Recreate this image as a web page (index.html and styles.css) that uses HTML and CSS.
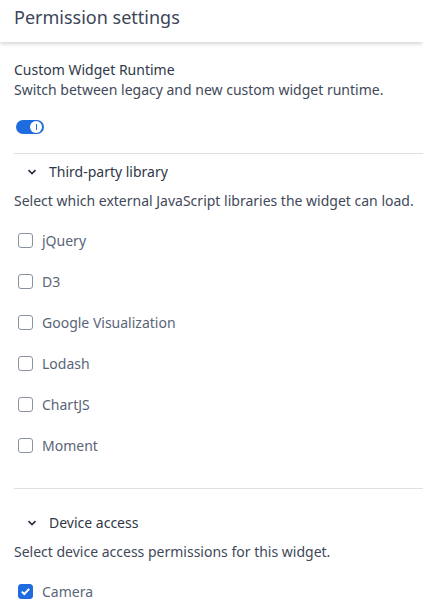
FILE: index.html
```html
<!DOCTYPE html>
<html>
<head>
<meta charset="utf-8">
<link rel="stylesheet" href="styles.css">
</head>
<body>
<div class="header">Permission settings</div>
<div class="content">
  <div class="setting">
    <div class="setting-title">Custom Widget Runtime</div>
    <div class="setting-desc">Switch between legacy and new custom widget runtime.</div>
    <div class="toggle"><span class="knob"></span></div>
  </div>
  <div class="divider"></div>
  <div class="section section-first">
    <div class="section-head">
      <svg class="chev" width="10" height="8" viewBox="0 0 10 8"><path d="M1.5 2.2 L5 5.6 L8.5 2.2" fill="none" stroke="#2d3646" stroke-width="1.8"/></svg>
      <span>Third-party library</span>
    </div>
    <div class="section-desc">Select which external JavaScript libraries the widget can load.</div>
    <div class="list">
      <label class="row"><span class="box"></span>jQuery</label>
      <label class="row"><span class="box"></span>D3</label>
      <label class="row"><span class="box"></span>Google Visualization</label>
      <label class="row"><span class="box"></span>Lodash</label>
      <label class="row"><span class="box"></span>ChartJS</label>
      <label class="row"><span class="box"></span>Moment</label>
    </div>
  </div>
  <div class="divider divider-second"></div>
  <div class="section section-second">
    <div class="section-head">
      <svg class="chev" width="10" height="8" viewBox="0 0 10 8"><path d="M1.5 2.2 L5 5.6 L8.5 2.2" fill="none" stroke="#2d3646" stroke-width="1.8"/></svg>
      <span>Device access</span>
    </div>
    <div class="section-desc">Select device access permissions for this widget.</div>
    <div class="list">
      <label class="row"><span class="box checked"><svg width="15" height="15" viewBox="0 0 15 15"><path d="M3.8 7.6 L6.3 10 L11.2 4.9" fill="none" stroke="#fff" stroke-width="2"/></svg></span>Camera</label>
    </div>
  </div>
</div>
</body>
</html>
```
FILE: styles.css
```css
* { box-sizing: border-box; }
html, body { margin: 0; padding: 0; background: #fff; }
body {
  font-family: "Noto Sans", "Open Sans", sans-serif;
  font-size: 14px;
  line-height: 20px;
  color: #3a4454;
  width: 423px;
  overflow: hidden;
}
.header {
  height: 42px;
  padding: 5px 14px 13px;
  font-size: 18px;
  line-height: 24px;
  color: #3c4657;
  box-shadow: 0 2px 4px rgba(0,0,0,0.16);
  position: relative;
}
.content {
  padding: 18px 0 0 14px;
}
.setting-title { color: #2f3847; }
.setting-desc { color: #3f4959; }
.toggle {
  margin: 20px 0 0 2px;
  width: 28px;
  height: 14px;
  border-radius: 7px;
  background: #1f6be0;
  display: flex;
  align-items: center;
  justify-content: flex-end;
  padding-right: 2px;
}
.knob {
  width: 12px;
  height: 12px;
  border-radius: 50%;
  background: #fff;
  position: relative;
}
.knob::after {
  content: "";
  position: absolute;
  left: 5.5px;
  top: 3px;
  width: 1px;
  height: 6px;
  background: #1f6be0;
}
.divider {
  height: 1px;
  background: #e0e0e0;
  margin-top: 19px;
}
.divider-second { margin-top: 22px; }
.section-head {
  display: flex;
  align-items: center;
  height: 20px;
  color: #2f3847;
}
.section-first .section-head { margin-top: 8px; }
.section-second .section-head { margin-top: 24px; }
.chev { margin: 0 12px 0 13px; }
.section-desc {
  margin-top: 9px;
  color: #3f4959;
}
.list {
  margin-top: 9px;
  display: flex;
  flex-direction: column;
}
.row {
  height: 41px;
  display: flex;
  align-items: center;
  color: #5a6578;
}
.box {
  width: 15px;
  height: 15px;
  border: 1px solid #8b93a0;
  border-radius: 3px;
  margin: 0 9px 0 4px;
  display: flex;
  align-items: center;
  justify-content: center;
}
.box.checked {
  background: #1f6be0;
  border-color: #1f6be0;
}
.box.checked svg { display: block; flex: none; }
```
